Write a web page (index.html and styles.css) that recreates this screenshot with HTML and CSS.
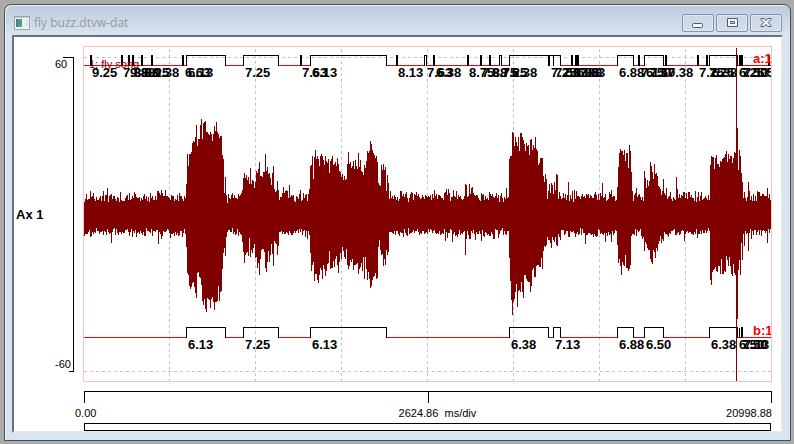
FILE: index.html
```
<!DOCTYPE html>
<html lang="en">
<head>
  <meta charset="UTF-8" />
  <meta name="viewport" content="width=device-width, initial-scale=1.0" />
  <title>fly buzz.dtvw-dat</title>
  <link rel="stylesheet" href="styles.css">
</head>
<body>
  <div class="window">
    <div class="titlebar">
      <svg class="app-icon" width="16" height="14" viewBox="0 0 16 14" aria-hidden="true">
        <rect x="0.5" y="0.5" width="15" height="13" fill="#f4f6f6" stroke="#9ba5ac" />
        <rect x="1" y="1" width="14" height="1" fill="#c3ccd4" />
        <rect x="2" y="3" width="6" height="8" fill="#4d9c7c" />
        <rect x="2" y="3" width="2" height="8" fill="#50789c" />
        <rect x="9" y="3" width="2" height="9" fill="#e6ece8" />
        <rect x="12" y="3" width="2" height="8" fill="#d5e2dc" />
      </svg>
      <span class="title">fly buzz.dtvw-dat</span>
      <div class="buttons">
        <button type="button" aria-label="Minimize">
          <svg width="12" height="12" viewBox="0 0 12 12"><rect x="0.5" y="6.5" width="10" height="4" rx="1" fill="#f4f4f4" stroke="#555a68" /></svg>
        </button>
        <button type="button" aria-label="Maximize">
          <svg width="12" height="12" viewBox="0 0 12 12"><path d="M1.500 1.500h10v8h-10zM4.500 4.500v2h4v-2z" fill="#f4f4f4" fill-rule="evenodd" stroke="#555a68" /></svg>
        </button>
        <button type="button" aria-label="Close">
          <svg width="12" height="12" viewBox="0 0 12 12"><path d="M1 1.500h3.200L6 3.700l1.800-2.200H11v1L8.200 5.500 11 8.500v1H7.800L6 7.300 4.200 9.500H1v-1l2.800-3L1 2.500z" fill="#f4f4f4" stroke="#555a68" /></svg>
        </button>
      </div>
    </div>

    <div class="client">
      <div class="chart">
        <div class="axis-name">Ax 1</div>
        <div class="scale">
          <span>60</span>
          <span>-60</span>
        </div>
        <svg class="plot" id="plot">
          <svg id="drawing" width="100%" height="100%" viewBox="84 47 687 334" preserveAspectRatio="none"></svg>
        </svg>
      </div>

      <div class="time">
        <div class="time-axis"></div>
        <div class="time-labels">
          <span>0.00</span>
          <span>2624.86&nbsp; ms/div</span>
          <span>20998.88</span>
        </div>
        <div class="overview"></div>
      </div>
    </div>
  </div>

  <script src="plot.js"></script>
</body>
</html>
```
FILE: styles.css
```
* {
  box-sizing: border-box;
}

body {
  margin: 0;
  padding: 4px 3px 3px 4px;
  background: #ababab;
  color: #000;
  font-family: "Liberation Sans", Arial, sans-serif;
}

.window {
  padding: 0 7px 7px;
  border: 1px solid #4c4f54;
  border-radius: 7px 7px 0 0;
  background: linear-gradient(#bccbdb, #d7e4f2 30px);
  box-shadow: inset 1px 1px 0 #e8f0f8;
}

/* Title bar */
.titlebar {
  display: flex;
  align-items: center;
  height: 30px;
  padding: 6px 1px 0 2px;
}

.title {
  flex: 1;
  margin-left: 4px;
  font-family: "Open Sans", "Segoe UI", sans-serif;
  font-size: 12px;
  line-height: 16px;
  color: #999;
}

.buttons {
  display: flex;
  gap: 2px;
}

.buttons button {
  display: flex;
  align-items: center;
  justify-content: center;
  width: 32px;
  height: 18px;
  padding: 0;
  border: 1px solid #8593ac;
  border-radius: 2px;
  background: linear-gradient(#c9d7e6, #d3dfec);
  box-shadow: inset 0 0 0 1px #dce6f1;
}

/* Client area */
.client {
  padding-top: 9px;
  border: 2px solid #6d7074;
  border-right-color: #e6e8ea;
  border-bottom-color: #e6e8ea;
  background: #fff;
}

.chart {
  display: flex;
  padding-right: 9px;
}

.axis-name {
  width: 41px;
  padding-left: 2px;
  align-self: center;
  font-size: 13px;
  font-weight: bold;
}

.scale {
  position: relative;
  display: flex;
  flex-direction: column;
  justify-content: space-between;
  width: 19px;
  margin: 11px 9px 10px 0;
  padding-right: 4px;
  border-right: 1px solid #000;
  direction: rtl;
  font-size: 11px;
  line-height: 15px;
}

.scale span {
  white-space: nowrap;
  unicode-bidi: plaintext;
}

.scale::before,
.scale::after {
  content: "";
  position: absolute;
  right: 0;
  height: 1px;
  background: #000;
}

.scale::before {
  top: 0;
  width: 10px;
}

.scale::after {
  bottom: 0;
  width: 4px;
}

.plot {
  flex: 1;
  min-width: 0;
  height: 336px;
  border: 1px solid #ffc0c0;
  overflow: hidden;
}

.grid {
  stroke: #c0c0dc;
  stroke-dasharray: 3 3;
  fill: none;
}

.wave,
.cursor {
  stroke: #800000;
  fill: none;
}

.baseline {
  stroke: #f00;
}

.events {
  stroke: #000;
  fill: none;
}

.event-label,
.channel {
  font-size: 13px;
  font-weight: bold;
}

.channel {
  fill: #f00;
}

.note {
  font-size: 11px;
  fill: #800000;
}

/* Time axis and overview bar */
.time {
  margin: 9px 9px 0 70px;
}

.time-axis {
  height: 12px;
  border: 1px solid #000;
  border-bottom: none;
  background: linear-gradient(#000, #000) center / 1px 100% no-repeat;
}

.time-labels {
  display: grid;
  grid-template-columns: 13fr 10fr 5fr;
  height: 20px;
  margin-left: -9px;
  font-size: 11px;
  line-height: 20px;
}

.time-labels span:last-child {
  text-align: right;
}

.overview {
  height: 8px;
  margin-right: 1px;
  border: 1px solid #000;
}
```
FILE: plot.js
```
const LEFT = 84;
const WIDTH = 687;
const NS = "http://www.w3.org/2000/svg";

const plot = document.getElementById("plot");
const drawing = document.getElementById("drawing");

// peaks of the song bursts, one value per column
const bursts = [
  {
    x: 186,
    top: [184,154,166,154,154,152,143,141,142,137,125,146,139,139,125,119,139,123,122,121,132,132,134,135,132,134,141,134,126,131,122,132,134,138,136,136,155,159,193,177,195,203],
    bottom: [247,273,275,286,289,287,283,282,287,293,298,273,272,277,278,285,301,305,299,309,312,298,299,300,308,299,297,302,310,302,302,301,286,301,292,291,269,253,248,256,237,232]
  },
  {
    x: 241,
    top: [193,190,178,173,178,175,180,177,184,168,184,180,181,188,182,171,173,169,162,176,176,177,172,172,154,171,167,174,173,178,185,173,166,189,192,191,181,190,200,197,197,193,187],
    bottom: [235,242,252,263,255,253,252,256,238,257,250,253,248,244,258,257,268,263,275,259,250,249,249,252,268,272,262,251,262,255,244,254,266,241,243,244,255,246,232,232,231,234,232]
  },
  {
    x: 309,
    top: [189,166,165,156,179,157,150,159,156,159,166,156,154,156,160,165,156,161,163,159,173,161,159,156,165,164,162,166,158,164,171,172,177,174,180,176,180,179,164,152,164,162,168,166,161,169,160,166,169,153,167,160,171,172,175,165,168,161,151,153,151,141,144,150,153,155,158,156,162,183,185,186,165,170,164,170,167,191,175,183,199],
    bottom: [235,253,271,265,262,281,274,274,280,283,275,268,270,279,265,269,276,271,264,263,251,269,268,268,261,267,259,256,265,273,262,253,259,247,251,257,259,249,265,269,266,260,262,259,270,265,265,264,263,274,269,267,263,271,257,279,257,269,280,272,279,288,286,280,277,276,273,279,278,247,240,250,255,254,266,259,265,250,255,252,232]
  },
  {
    x: 509,
    top: [159,156,156,132,133,146,137,142,146,137,151,133,133,137,140,144,151,143,146,145,155,140,139,150,145,148,137,149,151,165,163,158,158,158,176,182,174,179,199,191,184,193,183,185,194,182,190,174,175,199,192,196],
    bottom: [258,281,300,315,302,299,292,284,307,291,290,292,282,292,298,275,275,279,281,282,282,292,286,270,268,277,277,266,265,265,267,267,258,269,251,246,247,245,237,240,240,243,248,237,240,242,237,245,246,234,237,240]
  },
  {
    x: 617,
    top: [187,167,153,149,151,151,155,150,161,153,153,168,145,151,172,191],
    bottom: [245,263,259,266,275,262,265,266,255,268,268,271,269,265,236,234]
  },
  {
    x: 643,
    top: [201,171,178,188,180,186,181,162,166,172,179,164,174,173,176,186,187,189,195,191,179,193,195,188],
    bottom: [237,251,242,244,248,250,250,259,262,264,250,252,258,248,251,244,241,236,243,239,241,232,234,234]
  },
  {
    x: 710,
    top: [165,156,157,157,169,158,155,164,164,167,161,162,159,158,157,154,151,162,154,159,156,156,163,158,152,153,60,128,170,150,156,173,182,198,192],
    bottom: [280,285,272,270,269,267,271,272,266,266,274,259,274,274,271,272,256,260,266,257,266,274,276,264,273,275,330,319,270,260,275,243,260,234,246]
  }
];

// single peaks in the background noise: [x, top, bottom]
const spikes = [
  [90, 191, 237], [107, 188, 229], [111, 194, 243], [129, 193, 236],
  [157, 191, 230], [158, 191, 244], [165, 190, 232], [289, 185, 231], [300, 190, 232],
  [406, 192, 235], [411, 192, 233], [434, 190, 230], [445, 192, 241],
  [446, 189, 232], [448, 189, 233], [452, 197, 242], [453, 190, 234],
  [456, 191, 235], [465, 184, 255], [466, 185, 239], [469, 184, 239],
  [471, 188, 231], [472, 187, 233], [475, 196, 240], [481, 193, 241],
  [489, 192, 236], [493, 197, 239], [506, 188, 235], [568, 182, 237],
  [574, 190, 233], [576, 191, 234], [585, 198, 244], [602, 183, 234],
  [605, 194, 242], [611, 190, 242], [636, 188, 236], [642, 197, 239],
  [676, 177, 235], [677, 189, 233], [684, 192, 241], [748, 182, 251],
  [757, 191, 232], [767, 188, 243], [769, 194, 233]
];

// event blocks [start, end]; ticks are blocks too short to open up
const channelA = [
  [90, 91], [121, 122], [128, 129], [132, 133], [141, 142], [151, 152],
  [182, 183], [186, 225], [243, 278], [300, 301], [310, 386], [396, 397],
  [424, 426], [433, 434], [467, 468], [480, 481], [489, 490], [499, 501],
  [509, 548], [549, 553], [553, 560], [571, 572], [575, 576], [577, 578],
  [617, 633], [638, 639], [644, 663], [665, 666], [697, 698], [706, 707],
  [709, 737], [739, 740], [741, 742], [768, 769]
];
const channelB = [
  [186, 225], [243, 278], [310, 386], [509, 548], [553, 560],
  [617, 633], [644, 663], [709, 737], [739, 739], [741, 742]
];

const labelsA = [
  [92, "9.25"], [123, "7.88"], [130, "9.88"], [134, "8.88"], [144, "8.25"],
  [154, "9.38"], [185, "6.63"], [188, "6.13"], [245, "7.25"], [302, "7.63"],
  [312, "6.13"], [398, "8.13"], [427, "7.63"], [436, "6.38"], [469, "8.75"],
  [482, "7.88"], [492, "8.75"], [502, "7.25"], [512, "6.38"], [551, "7.25"],
  [555, "7.50"], [563, "7.13"], [574, "8.88"], [577, "6.88"], [580, "7.63"],
  [619, "6.88"], [641, "7.13"], [646, "6.50"], [650, "7.50"], [668, "7.38"],
  [699, "7.25"], [709, "7.25"], [712, "6.38"], [739, "6.25"], [742, "7.50"],
  [744, "7.13"], [767, "5.88"]
];
const labelsB = [
  [188, "6.13"], [245, "7.25"], [312, "6.13"], [511, "6.38"], [555, "7.13"],
  [619, "6.88"], [646, "6.50"], [711, "6.38"], [739, "6.50"], [742, "7.50"],
  [744, "7.13"]
];

function addPath(className, d) {
  const path = document.createElementNS(NS, "path");
  path.setAttribute("class", className);
  path.setAttribute("d", d);
  path.setAttribute("shape-rendering", "crispEdges");
  drawing.appendChild(path);
}

function addText(className, x, y, value) {
  const text = document.createElementNS(NS, "text");
  text.setAttribute("class", className);
  text.setAttribute("x", (x - LEFT) / WIDTH * 100 + "%");
  text.setAttribute("y", y);
  text.textContent = value;
  plot.appendChild(text);
}

function drawGrid() {
  let d = "M84 57.5H771M84 371.5H771";
  for (let x = 169; x < 771; x += 86) {
    d += `M${x}.5 49V381`;
  }
  addPath("grid", d);
}

function drawWave() {
  const top = [];
  const bottom = [];
  let seed = 17;
  const random = () => {
    seed = (seed * 16807) % 2147483647;
    return seed / 2147483647;
  };

  for (let x = LEFT; x < LEFT + WIDTH; x++) {
    top[x] = Math.round(202 - random() * 7 - Math.pow(random(), 3) * 6);
    bottom[x] = Math.round(228 + random() * 7 + Math.pow(random(), 4) * 5);
  }
  spikes.forEach(([x, high, low]) => {
    top[x] = high;
    bottom[x] = low;
  });
  bursts.forEach(burst => {
    burst.top.forEach((value, i) => {
      top[burst.x + i] = value;
      bottom[burst.x + i] = burst.bottom[i];
    });
  });

  let d = "";
  for (let x = LEFT; x < LEFT + WIDTH; x++) {
    d += `M${x}.5 ${top[x]}V${bottom[x]}`;
  }
  addPath("wave", d);
}

function drawEvents(blocks, y) {
  let line = "";
  let d = "";
  let from = LEFT;
  blocks.forEach(([start, end]) => {
    if (start > from) line += `M${from} ${y + 10}.5H${start}`;
    d += `M${start}.5 ${y + 11}V${y}.5H${end}.5V${y + 11}`;
    from = end + 1;
  });
  line += `M${from} ${y + 10}.5H771`;
  addPath("baseline", line);
  addPath("events", d);
}

drawGrid();
drawWave();
addText("note", 89, 21, "1: fly song");
drawEvents(channelA, 55);
drawEvents(channelB, 327);
addPath("cursor", "M736.5 48V381");
labelsA.forEach(([x, value]) => addText("event-label", x, 30, value));
labelsB.forEach(([x, value]) => addText("event-label", x, 302, value));
addText("channel", 753, 16, "a:1");
addText("channel", 753, 288, "b:1");
```
